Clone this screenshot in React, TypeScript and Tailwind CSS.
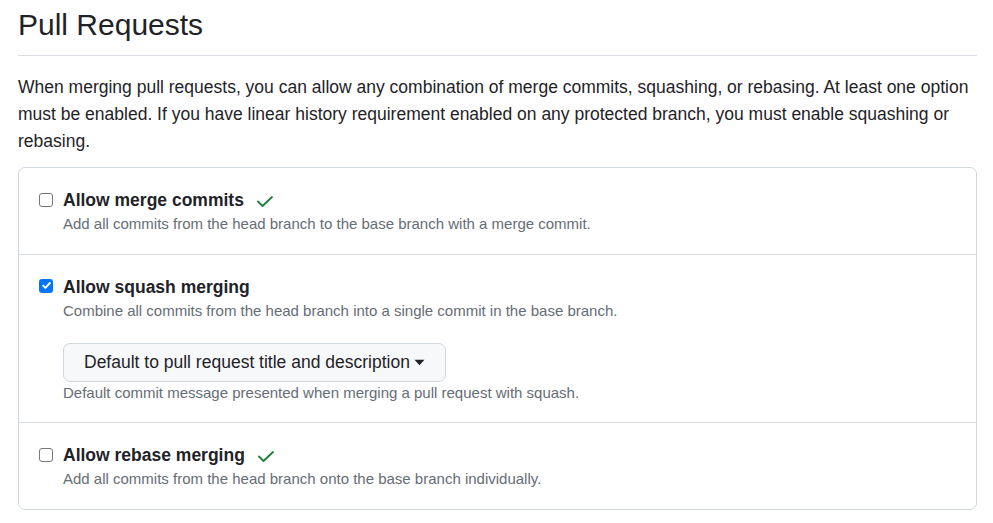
import React from "react";

const CheckMark = () => (
  <svg width="16" height="11" viewBox="0 0 16 11" fill="none" className="ml-[13px] mt-[2px] shrink-0">
    <path d="M1 5.5L5.5 10L15 1" stroke="#1a7f37" strokeWidth="1.8" strokeLinecap="round" strokeLinejoin="round" />
  </svg>
);

const Box = ({ checked }: { checked?: boolean }) =>
  checked ? (
    <span className="mt-[5px] flex h-[14px] w-[14px] shrink-0 items-center justify-center rounded-[3px] bg-[#0075ff]">
      <svg width="11" height="11" viewBox="0 0 11 11" fill="none">
        <path d="M2.2 5.6l2.2 2.3L8.9 3" stroke="#fff" strokeWidth="2" strokeLinecap="round" strokeLinejoin="round" />
      </svg>
    </span>
  ) : (
    <span className="mt-[6px] h-[14px] w-[14px] shrink-0 rounded-[3px] border border-[#767676] bg-white" />
  );

const options = [
  {
    title: "Allow merge commits",
    desc: "Add all commits from the head branch to the base branch with a merge commit.",
    check: true,
  },
  {
    title: "Allow squash merging",
    desc: "Combine all commits from the head branch into a single commit in the base branch.",
    squash: true,
  },
  {
    title: "Allow rebase merging",
    desc: "Add all commits from the head branch onto the base branch individually.",
    check: true,
  },
];

export default function App() {
  return (
    <div className="min-h-screen bg-white pl-[18px] pr-[16px] font-['Liberation_Sans',Arial,sans-serif] text-[#1f2328]">
      <h2 className="border-b border-[#d8dee4] pt-[2px] pb-[8px] text-[30px] leading-[45px] font-normal">
        Pull Requests
      </h2>
      <p className="mt-[18px] text-[17.5px] leading-[27px]">
        When merging pull requests, you can allow any combination of merge commits, squashing, or rebasing. At least one option
        must be enabled. If you have linear history requirement enabled on any protected branch, you must enable squashing or
        rebasing.
      </p>
      <div className="mt-[12px] rounded-[7px] border border-[#d0d7de]">
        {options.map((o, i) => (
          <div
            key={o.title}
            className={`flex gap-[10px] pl-[20px] pr-[20px] pt-[19px] pb-[18px] ${i > 0 ? "border-t border-[#d8dee4]" : ""}`}
          >
            <Box checked={o.squash} />
            <div>
              <div className="flex items-center text-[17.5px] leading-[26.25px] font-bold">
                {o.title}
                {o.check && <CheckMark />}
              </div>
              <div className="text-[15px] leading-[22.5px] text-[#656d76]">{o.desc}</div>
              {o.squash && (
                <>
                  <button className="mt-[20px] flex h-[39px] items-center gap-[4px] rounded-[7px] border border-[#d0d7de] bg-[#f6f8fa] px-[20px] text-[17.5px] text-[#1f2328]">
                    Default to pull request title and description
                    <svg width="11" height="7" viewBox="0 0 11 7" fill="currentColor" className="mt-[1px]">
                      <path d="M0.5 0.8h10L5.5 6.2z" />
                    </svg>
                  </button>
                  <div className="text-[15px] leading-[22.5px] text-[#656d76]">
                    Default commit message presented when merging a pull request with squash.
                  </div>
                </>
              )}
            </div>
          </div>
        ))}
      </div>
    </div>
  );
}
